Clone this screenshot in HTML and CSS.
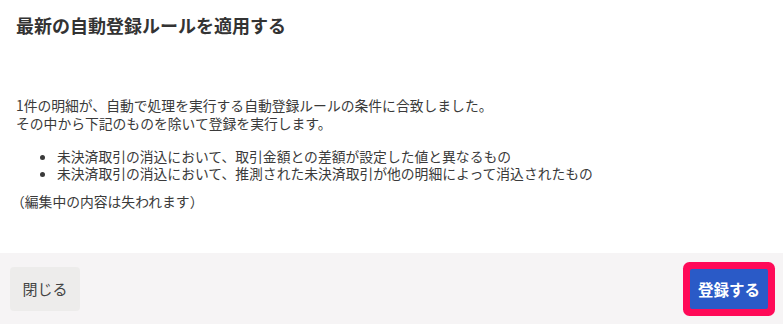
FILE: index.html
```html
<!DOCTYPE html>
<html lang="ja">
<head>
<meta charset="utf-8">
<link rel="stylesheet" href="styles.css">
</head>
<body>
<div class="modal">
  <div class="header">
    <h1 class="title">最新の自動登録ルールを適用する</h1>
  </div>
  <div class="body">
    <p class="lead">1件の明細が、自動で処理を実行する自動登録ルールの条件に合致しました。<br>その中から下記のものを除いて登録を実行します。</p>
    <ul class="list">
      <li>未決済取引の消込において、取引金額との差額が設定した値と異なるもの</li>
      <li>未決済取引の消込において、推測された未決済取引が他の明細によって消込されたもの</li>
    </ul>
    <p class="note">（編集中の内容は失われます）</p>
  </div>
  <div class="footer">
    <button class="btn btn-close">閉じる</button>
    <button class="btn btn-primary">登録する</button>
  </div>
</div>
</body>
</html>
```
FILE: styles.css
```css
html, body {
  margin: 0;
  padding: 0;
  background: #ffffff;
}
body {
  font-family: "Noto Sans CJK JP", "Noto Sans", sans-serif;
  color: #3a3a3a;
  width: 783px;
  height: 324px;
  overflow: hidden;
}
.modal {
  display: flex;
  flex-direction: column;
  height: 324px;
}
.header {
  padding: 13px 16px 0;
  height: 44px;
  box-sizing: border-box;
}
.title {
  margin: 0;
  font-size: 18px;
  line-height: 24px;
  font-weight: bold;
  color: #333333;
}
.body {
  flex: 1;
  padding: 52px 16px 0;
  font-size: 13.8px;
  line-height: 18px;
}
.lead {
  margin: 0;
}
.list {
  margin: 16px 0 0;
  padding-left: 41px;
}
.list li {
  line-height: 17px;
}
.note {
  margin: 10px 0 0 -5px;
}
.footer {
  height: 71px;
  background: #f6f4f5;
  display: flex;
  align-items: center;
  justify-content: space-between;
  padding: 0 15px 0 10px;
}
.btn {
  font-family: "Noto Sans CJK JP", "Noto Sans", sans-serif;
  font-size: 15px;
  border: none;
  border-radius: 4px;
  cursor: pointer;
  padding: 0;
}
.btn-close {
  width: 70px;
  height: 44px;
  background: #edeceb;
  color: #444444;
}
.btn-primary {
  width: 78px;
  height: 40px;
  background: #2a5ac7;
  color: #ffffff;
  font-size: 15.5px;
  font-weight: bold;
  border-radius: 2px;
  box-shadow: 0 0 0 7px #ff0a58;
}
```
